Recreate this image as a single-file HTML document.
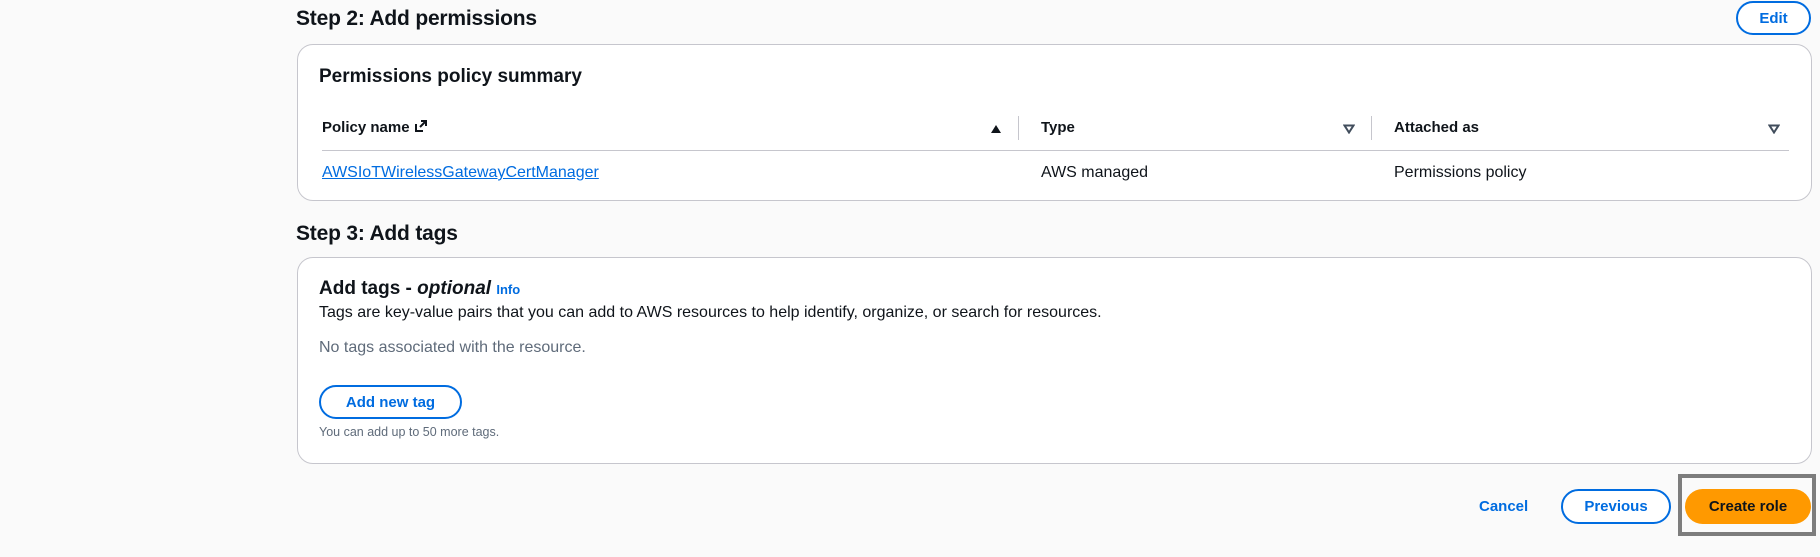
<!DOCTYPE html>
<html><head><style>
*{box-sizing:border-box;margin:0;padding:0}
body{width:1820px;height:557px;background:#fafafa;font-family:"Liberation Sans",sans-serif;color:#0f141a;position:relative;overflow:hidden;font-size:16px}
.a{position:absolute;white-space:nowrap}
h2{position:absolute;font-size:21px;font-weight:bold;letter-spacing:-0.2px}
.panel{position:absolute;background:#fff;border:1px solid #c6c6cd;border-radius:16px}
.btn{position:absolute;border:2px solid #006ce0;border-radius:20px;color:#006ce0;font-weight:bold;display:flex;align-items:center;justify-content:center;background:#fff;font-size:15px}
.blue{color:#006ce0}
.th{font-weight:bold;font-size:15px}
.div{position:absolute;width:1px;height:24px;background:#c6c6cd}
</style></head><body>
<h2 style="left:296px;top:7px">Step 2: Add permissions</h2>
<div class="btn" style="left:1736px;top:1px;width:75px;height:34px">Edit</div>
<div class="panel" style="left:297px;top:44px;width:1515px;height:157px"></div>
<div class="a" style="left:319px;top:66px;font-size:19px;font-weight:bold">Permissions policy summary</div>
<div class="a th" style="left:322px;top:119px">Policy name <svg width="14" height="14" viewBox="0 0 14 14" style="vertical-align:-1px"><path d="M2 5v7h7M6 8l6-6M7 2h5v5" fill="none" stroke="#0f141a" stroke-width="2"/></svg></div>
<svg class="a" style="left:990px;top:124px" width="12" height="10"><path d="M6 1L11 9H1Z" fill="#0f141a"/></svg>
<div class="div" style="left:1018px;top:116px"></div>
<div class="a th" style="left:1041px;top:119px">Type</div>
<svg class="a" style="left:1343px;top:124px" width="12" height="10"><path d="M1.5 1.5H10.5L6 8.5Z" fill="none" stroke="#414d5c" stroke-width="2"/></svg>
<div class="div" style="left:1371px;top:116px"></div>
<div class="a th" style="left:1394px;top:119px">Attached as</div>
<svg class="a" style="left:1768px;top:124px" width="12" height="10"><path d="M1.5 1.5H10.5L6 8.5Z" fill="none" stroke="#414d5c" stroke-width="2"/></svg>
<div class="a" style="left:322px;top:150px;width:1467px;height:1px;background:#c6c6cd"></div>
<div class="a blue" style="left:322px;top:164px;text-decoration:underline">AWSIoTWirelessGatewayCertManager</div>
<div class="a" style="left:1041px;top:164px">AWS managed</div>
<div class="a" style="left:1394px;top:164px">Permissions policy</div>

<h2 style="left:296px;top:222px">Step 3: Add tags</h2>
<div class="panel" style="left:297px;top:257px;width:1515px;height:207px"></div>
<div class="a" style="left:319px;top:278px;font-size:19px;font-weight:bold">Add tags - <i>optional</i> <span class="blue" style="font-size:13px">Info</span></div>
<div class="a" style="left:319px;top:304px">Tags are key-value pairs that you can add to AWS resources to help identify, organize, or search for resources.</div>
<div class="a" style="left:319px;top:339px;color:#5f6b7a">No tags associated with the resource.</div>
<div class="btn" style="left:319px;top:385px;width:143px;height:34px">Add new tag</div>
<div class="a" style="left:319px;top:425px;font-size:12.5px;color:#5f6b7a">You can add up to 50 more tags.</div>

<div class="a blue" style="left:1479px;top:498px;font-weight:bold;font-size:15px">Cancel</div>
<div class="btn" style="left:1561px;top:489px;width:110px;height:35px">Previous</div>
<div class="a" style="left:1678px;top:474px;width:138px;height:62px;border:4px solid #7d7d7d"></div>
<div class="a" style="left:1685px;top:489px;width:126px;height:35px;border-radius:18px;background:#ff9900;font-weight:bold;font-size:15px;display:flex;align-items:center;justify-content:center">Create role</div>
</body></html>
